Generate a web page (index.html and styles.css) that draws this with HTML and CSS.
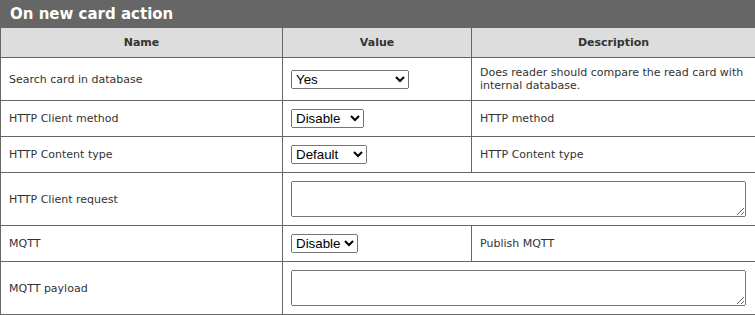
FILE: index.html
```html
<!DOCTYPE html>
<html lang="en">
<head>
<meta charset="utf-8">
<title>On new card action</title>
<link rel="stylesheet" href="styles.css">
</head>
<body>
<div class="panel">
  <div class="panel-title">On new card action</div>
  <table class="settings">
    <colgroup>
      <col class="c-name">
      <col class="c-value">
      <col class="c-desc">
    </colgroup>
    <thead>
      <tr><th>Name</th><th>Value</th><th>Description</th></tr>
    </thead>
    <tbody>
      <tr>
        <td>Search card in database</td>
        <td><select class="sel sel-yes"><option>Yes</option><option>No</option></select></td>
        <td>Does reader should compare the read card with internal database.</td>
      </tr>
      <tr>
        <td>HTTP Client method</td>
        <td><select class="sel sel-method"><option>Disable</option><option>GET</option><option>POST</option></select></td>
        <td>HTTP method</td>
      </tr>
      <tr>
        <td>HTTP Content type</td>
        <td><select class="sel sel-type"><option>Default</option><option>JSON</option></select></td>
        <td>HTTP Content type</td>
      </tr>
      <tr>
        <td>HTTP Client request</td>
        <td colspan="2"><textarea class="area"></textarea></td>
      </tr>
      <tr>
        <td>MQTT</td>
        <td><select class="sel sel-mqtt"><option>Disable</option><option>Enable</option></select></td>
        <td>Publish MQTT</td>
      </tr>
      <tr>
        <td>MQTT payload</td>
        <td colspan="2"><textarea class="area"></textarea></td>
      </tr>
    </tbody>
  </table>
</div>
</body>
</html>
```
FILE: styles.css
```css
html, body {
  margin: 0;
  padding: 0;
  background: #fff;
}
body {
  font-family: "DejaVu Sans", Verdana, sans-serif;
  font-size: 11px;
  line-height: 13px;
  color: #333;
}
.panel {
  width: 755px;
}
.panel-title {
  background: #666;
  color: #fff;
  font-weight: bold;
  font-size: 15px;
  height: 28px;
  line-height: 28px;
  padding-left: 10px;
}
.settings {
  width: 755px;
  border-collapse: collapse;
  table-layout: fixed;
  border: 1px solid #666;
  border-top: 0;
}
.c-name { width: 282px; }
.c-value { width: 189px; }
.c-desc { width: 284px; }
.settings th,
.settings td {
  border: 1px solid #666;
  padding: 8px;
  text-align: left;
  vertical-align: middle;
}
.settings th {
  border-top: 0;
  background: #ddd;
  font-weight: bold;
  text-align: center;
}
.sel {
  display: block;
  margin: 0;
  height: 19px;
  font-family: "Liberation Sans", Arial, sans-serif;
  font-size: 13.333px;
  color: #000;
}
.sel-yes { width: 118px; }
.sel-method { width: 73px; }
.sel-type { width: 76px; }
.sel-mqtt { width: 67px; }
.area {
  display: block;
  box-sizing: border-box;
  width: 455px;
  height: 36px;
  margin: 0;
  resize: both;
}
```
